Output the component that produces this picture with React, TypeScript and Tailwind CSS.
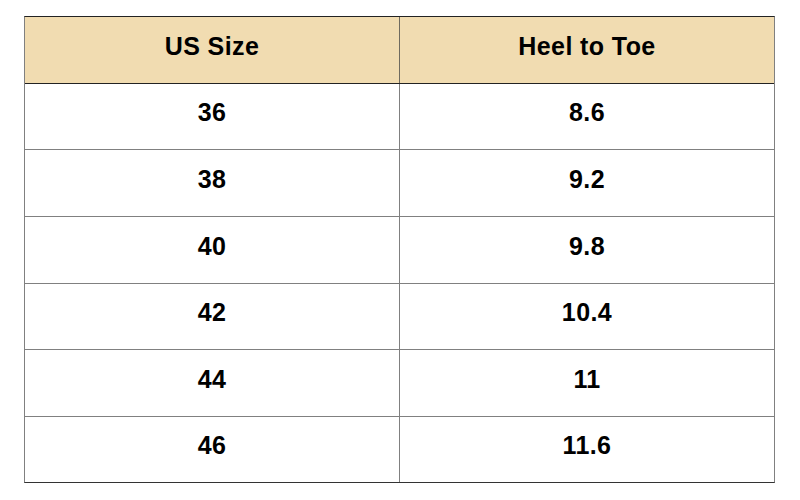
import React from "react";

const rows: [string, string, number][] = [
  ["36", "8.6", 66],
  ["38", "9.2", 67],
  ["40", "9.8", 67],
  ["42", "10.4", 66],
  ["44", "11", 67],
  ["46", "11.6", 66],
];

const cell = "flex items-center justify-center pb-[7px] text-[25px] tracking-[0.4px] font-bold text-black";

export default function App() {
  return (
    <div className="w-[800px] h-[500px] bg-white pt-[16px] pl-[24px]" style={{ fontFamily: '"Liberation Sans", Arial, sans-serif' }}>
      <div className="w-[751px] border-t border-t-[#222] border-x border-x-[#808080] border-b border-b-[#333]">
        <div className="flex h-[67px] bg-[#f1dcb1] border-b border-b-[#222]">
          <div className={`w-[375px] border-r border-r-[#6f6a5e] ${cell}`}>US Size</div>
          <div className={`flex-1 ${cell}`}>Heel to Toe</div>
        </div>
        {rows.map(([a, b, h], i) => (
          <div
            key={a}
            className={`flex ${i < rows.length - 1 ? "border-b border-b-[#808080]" : ""}`}
            style={{ height: i < rows.length - 1 ? h : h - 1 }}
          >
            <div className={`w-[375px] border-r border-r-[#808080] ${cell}`}>{a}</div>
            <div className={`flex-1 ${cell}`}>{b}</div>
          </div>
        ))}
      </div>
    </div>
  );
}
